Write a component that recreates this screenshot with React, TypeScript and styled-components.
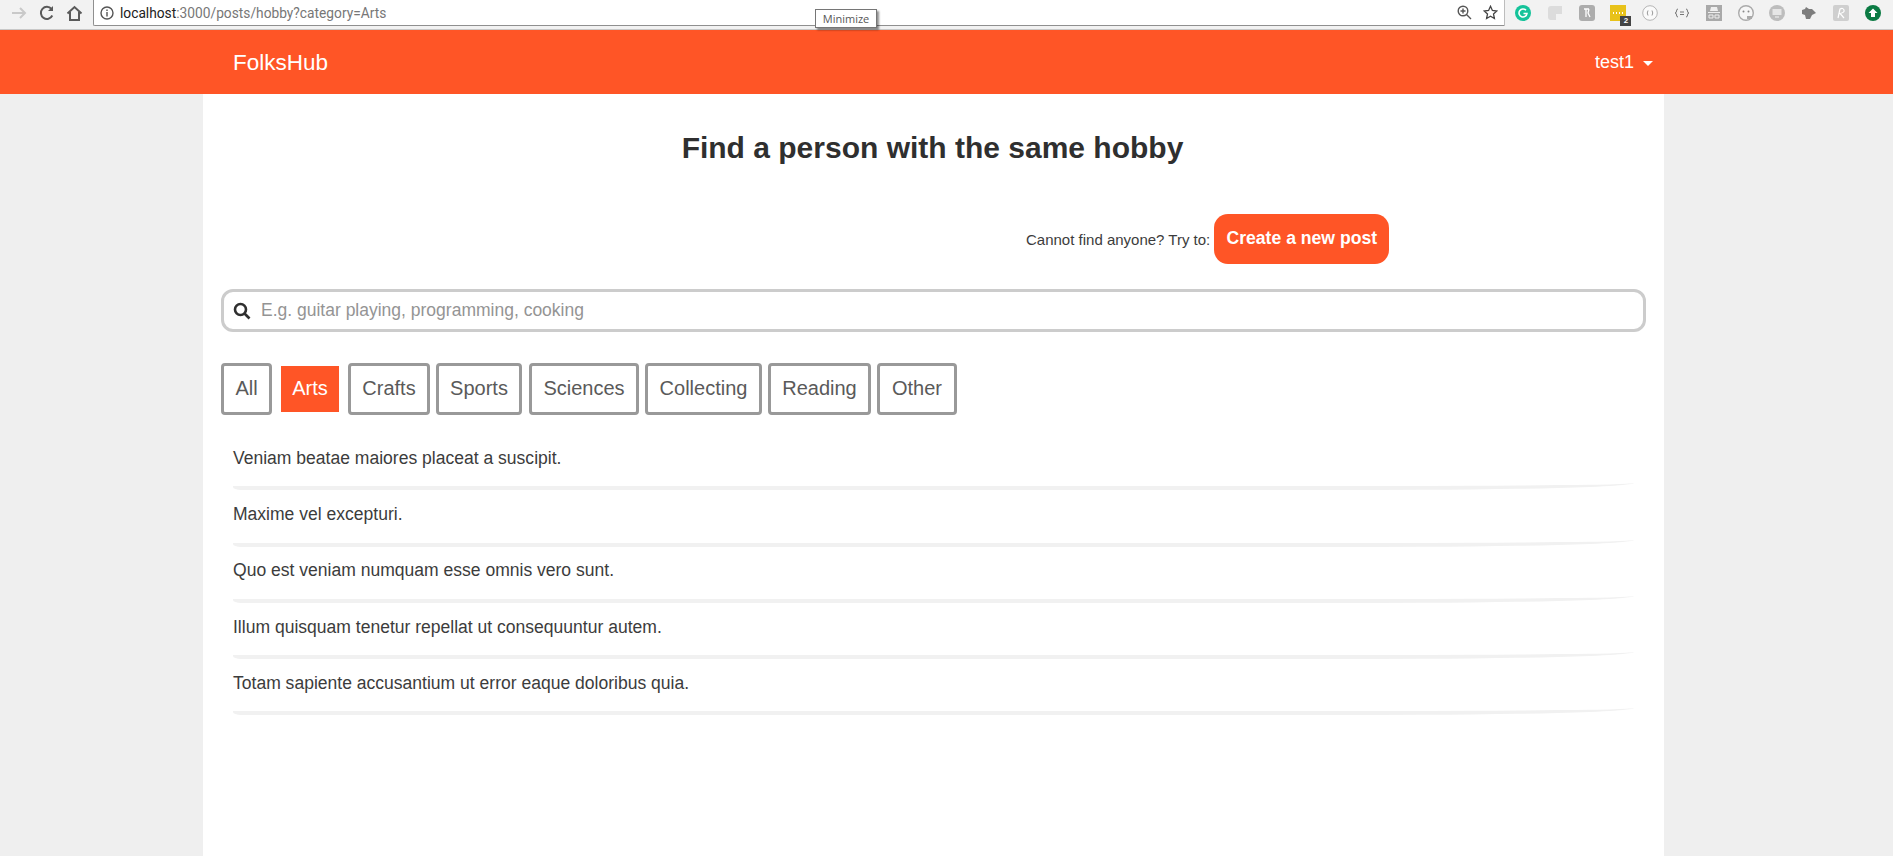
import React from "react";
import styled, { createGlobalStyle } from "styled-components";

const Global = createGlobalStyle`
  html, body { margin: 0; padding: 0; background: #efefef; }
  body { font-family: "Liberation Sans", Arial, sans-serif; color: #2f2f2f; overflow: hidden; }
  * { box-sizing: border-box; }
`;

const Page = styled.div`
  width: 1893px;
  height: 856px;
  display: flex;
  flex-direction: column;
  position: relative;
  overflow: hidden;
`;

const Chrome = styled.div`
  height: 30px;
  flex: none;
  display: flex;
  align-items: flex-start;
  background: #f2f2f2;
  border-bottom: 1px solid #c8c8c8;
`;

const NavButtons = styled.div`
  width: 93px;
  height: 26px;
  flex: none;
  display: flex;
  align-items: center;
  padding-left: 10px;
  gap: 11px;
`;

const Omnibox = styled.div`
  width: 1412px;
  height: 26px;
  flex: none;
  display: flex;
  align-items: center;
  background: #fff;
  border-left: 1px solid #8f8f8f;
  border-bottom: 1px solid #8f8f8f;
  border-right: 1px solid #bdbdbd;
  border-bottom-left-radius: 2px;
  padding-left: 6px;
  font-family: "Roboto", "Liberation Sans", sans-serif;
  font-size: 13.75px;
`;

const Host = styled.span`
  color: #222;
  margin-left: 6px;
`;

const UrlRest = styled.span`
  color: #777;
`;

const OmniSpacer = styled.div`
  flex: 1;
`;

const OmniActions = styled.div`
  display: flex;
  align-items: center;
  gap: 11px;
  padding-right: 6px;
`;

const Extensions = styled.div`
  flex: 1;
  height: 26px;
  display: flex;
  align-items: center;
  padding-left: 10px;
  gap: 15.8px;
`;

const Ext = styled.div`
  position: relative;
  width: 16px;
  height: 16px;
  flex: none;
  display: flex;
  align-items: center;
  justify-content: center;
`;

const ExtBadge = styled.span`
  position: absolute;
  left: 10px;
  top: 11px;
  width: 11px;
  height: 10px;
  background: #444;
  color: #fff;
  font-size: 8px;
  line-height: 10px;
  text-align: center;
  font-weight: 700;
`;

const Tooltip = styled.div`
  position: absolute;
  left: 815px;
  top: 9px;
  width: 62px;
  height: 19px;
  background: #fff;
  border: 1px solid #767676;
  box-shadow: 2px 2px 2px rgba(0, 0, 0, 0.45);
  font-family: "Open Sans", "Liberation Sans", sans-serif;
  font-size: 11px;
  line-height: 17px;
  text-align: center;
  color: #575757;
  z-index: 3;
`;

const Header = styled.header`
  height: 64px;
  flex: none;
  background: #ff5526;
  color: #fff;
  display: flex;
  align-items: center;
  justify-content: space-between;
  padding: 1px 240px 0 233px;
`;

const Brand = styled.div`
  font-size: 22.5px;
`;

const UserMenu = styled.div`
  font-size: 18px;
  display: flex;
  align-items: center;
  gap: 9px;
`;

const Caret = styled.span`
  width: 0;
  height: 0;
  margin-top: 2px;
  border-left: 5px solid transparent;
  border-right: 5px solid transparent;
  border-top: 5px solid #fff;
`;

const Main = styled.main`
  width: 1461px;
  margin-left: 203px;
  flex: 1;
  background: #fff;
  padding: 0 18px;
`;

const Title = styled.h1`
  margin: 34px 0 0;
  padding-right: 2px;
  font-size: 30px;
  line-height: 40px;
  font-weight: 700;
  text-align: center;
  color: #2f2f2f;
`;

const CtaRow = styled.div`
  margin-top: 46px;
  height: 50px;
  display: flex;
  align-items: center;
  padding-left: 805px;
`;

const CtaText = styled.span`
  font-size: 15px;
  color: #3c3c3c;
  margin-right: 4px;
`;

const CtaButton = styled.button`
  width: 175px;
  height: 50px;
  border: none;
  border-radius: 14px;
  background: #ff5526;
  color: #fff;
  font: 700 17.6px "Liberation Sans", Arial, sans-serif;
  padding: 0 0 2px;
`;

const Search = styled.div`
  margin-top: 25px;
  height: 43px;
  width: 1425px;
  display: flex;
  align-items: center;
  border: 3px solid #cccccc;
  border-radius: 12px;
  padding-left: 9px;
  gap: 10px;
`;

const Placeholder = styled.span`
  font-size: 17.5px;
  color: #949494;
`;

const Chips = styled.div`
  margin-top: 31px;
  height: 52px;
  display: flex;
  align-items: center;
`;

const Chip = styled.button<{ $active?: boolean; $w: number; $after: number }>`
  width: ${(p) => p.$w}px;
  height: ${(p) => (p.$active ? 46 : 52)}px;
  margin-right: ${(p) => p.$after}px;
  border: ${(p) => (p.$active ? "none" : "3px solid #999999")};
  border-radius: ${(p) => (p.$active ? 0 : 4)}px;
  background: ${(p) => (p.$active ? "#ff5526" : "#fff")};
  color: ${(p) => (p.$active ? "#fff" : "#5a5a5a")};
  font: 20px "Liberation Sans", Arial, sans-serif;
  padding: 0 0 1px;
`;

const List = styled.div`
  margin-top: 19px;
  padding: 0 12px;
`;

const Row = styled.div`
  height: 56.3px;
  display: flex;
  align-items: center;
  padding-bottom: 4px;
  font-size: 17.55px;
  color: #3c3c3c;
  border-bottom: 4px solid #f1f1f1;
  border-bottom-right-radius: 260px 7px;
  border-bottom-left-radius: 8px 3px;
`;

const categories: [string, number, number][] = [
  ["Crafts", 82, 6],
  ["Sports", 86, 7],
  ["Sciences", 110, 6],
  ["Collecting", 117, 6],
  ["Reading", 103, 6],
  ["Other", 80, 0],
];

const posts = [
  "Veniam beatae maiores placeat a suscipit.",
  "Maxime vel excepturi.",
  "Quo est veniam numquam esse omnis vero sunt.",
  "Illum quisquam tenetur repellat ut consequuntur autem.",
  "Totam sapiente accusantium ut error eaque doloribus quia.",
];

const Grey = ({ children }: { children: React.ReactNode }) => (
  <svg width="16" height="16" viewBox="0 0 16 16">{children}</svg>
);

export default function App() {
  return (
    <Page>
      <Global />
      <Chrome>
        <NavButtons>
          <svg width="18" height="18" viewBox="0 0 18 18" fill="none" stroke="#c9c9c9" strokeWidth="2">
            <path d="M2 9h13M10 4l5 5-5 5" />
          </svg>
          <svg width="16" height="16" viewBox="0 0 16 16" fill="none" stroke="#5a5a5a" strokeWidth="2">
            <path d="M13.3 10.5A6 6 0 1 1 12.5 4" />
            <path d="M14 1v5H9" fill="#5a5a5a" stroke="none" />
          </svg>
          <svg width="17" height="17" viewBox="0 0 17 17" fill="none" stroke="#5a5a5a" strokeWidth="2">
            <path d="M1.5 8.5 8.5 2l7 6.500M4 7v8h9V7" />
          </svg>
        </NavButtons>
        <Omnibox>
          <svg width="14" height="14" viewBox="0 0 14 14" fill="none" stroke="#555" strokeWidth="1.4">
            <circle cx="7" cy="7" r="6" />
            <path d="M7 6v4.500M7 3.500v1.500" />
          </svg>
          <Host>localhost</Host>
          <UrlRest>:3000/posts/hobby?category=Arts</UrlRest>
          <OmniSpacer />
          <OmniActions>
            <svg width="15" height="15" viewBox="0 0 15 15" fill="none" stroke="#555" strokeWidth="1.4">
              <circle cx="6" cy="6" r="4.800" />
              <path d="M9.500 9.500 14 14M6 3.500v5M3.500 6h5" />
            </svg>
            <svg width="15" height="15" viewBox="0 0 15 15" fill="none" stroke="#444" strokeWidth="1.3">
              <path d="M7.500 1.300 9.400 5.500l4.400.5-3.300 3 .9 4.500-3.900-2.300-3.900 2.300.9-4.500-3.300-3 4.400-.5z" />
            </svg>
          </OmniActions>
        </Omnibox>
        <Extensions>
          <Ext>
            <Grey>
              <circle cx="8" cy="8" r="8" fill="#15c39a" />
              <path d="M11 5.300A4 4 0 1 0 12 8.500H8.500" fill="none" stroke="#fff" strokeWidth="1.600" />
            </Grey>
          </Ext>
          <Ext>
            <Grey>
              <path d="M1 4a3 3 0 0 1 3-3h11v8H9v6H4a3 3 0 0 1-3-3z" fill="#dcdcdc" />
            </Grey>
          </Ext>
          <Ext>
            <Grey>
              <rect width="16" height="16" rx="3" fill="#adadad" />
              <path d="M5 4h5M7 4v8M10 4l-1 4 2 4" fill="none" stroke="#fff" strokeWidth="1.300" />
            </Grey>
          </Ext>
          <Ext>
            <Grey>
              <rect width="16" height="16" fill="#e8c21a" />
              <path d="M3 8h1M6 8h1M9 8h1M12 8h1" stroke="#fff" strokeWidth="2" />
            </Grey>
            <ExtBadge>2</ExtBadge>
          </Ext>
          <Ext>
            <Grey>
              <circle cx="8" cy="8" r="7.300" fill="#fafafa" stroke="#b5b5b5" />
              <path d="M6 5.500Q4.500 8 6 10.500M10 5.500Q11.500 8 10 10.500" fill="none" stroke="#999" />
            </Grey>
          </Ext>
          <Ext>
            <Grey>
              <path d="M4 4Q2.500 4 2.500 6T1 8q1.500 0 1.500 2T4 12M12 4q1.500 0 1.500 2T15 8q-1.500 0-1.500 2T12 12" fill="none" stroke="#777" />
              <path d="M6 7h4M6 9.500h4" stroke="#777" />
            </Grey>
          </Ext>
          <Ext>
            <Grey>
              <rect width="16" height="16" fill="#a9a9a9" />
              <path d="M5 2h6l1 4H4zM2 7h12v1H2z" fill="#eee" />
              <path d="M3 10h4v3H3zM9 10h4v3H9z" fill="none" stroke="#eee" />
            </Grey>
          </Ext>
          <Ext>
            <Grey>
              <circle cx="8" cy="8" r="7.300" fill="#f6f6f6" stroke="#aaa" strokeWidth="1.400" />
              <circle cx="5.500" cy="6.500" r="1" fill="#888" />
              <circle cx="10.500" cy="6.500" r="1" fill="#888" />
              <path d="M9 11h5v3H9z" fill="#aaa" />
            </Grey>
          </Ext>
          <Ext>
            <Grey>
              <circle cx="8" cy="8" r="8" fill="#bdbdbd" />
              <rect x="3.500" y="4" width="9" height="6" fill="#e6e6e6" />
              <path d="M6 12h4" stroke="#e6e6e6" strokeWidth="1.400" />
            </Grey>
          </Ext>
          <Ext>
            <Grey>
              <path d="M1 5l3-1 1-2 3 2h3l4 4-4 2-2 4H5l-1-4-3-1z" fill="#7d7d7d" />
            </Grey>
          </Ext>
          <Ext>
            <Grey>
              <rect width="16" height="16" rx="2" fill="#cfcfcf" />
              <path d="M5 13 7 4q3-1.500 4 1T7 8.500l4 4.500" fill="none" stroke="#fff" strokeWidth="1.200" />
            </Grey>
          </Ext>
          <Ext>
            <Grey>
              <circle cx="8" cy="8" r="8" fill="#0b7a43" />
              <path d="M8 3.500 12.500 8H10v4H6V8H3.500z" fill="#fff" />
            </Grey>
          </Ext>
        </Extensions>
      </Chrome>
      <Tooltip>Minimize</Tooltip>
      <Header>
        <Brand>FolksHub</Brand>
        <UserMenu>
          test1
          <Caret />
        </UserMenu>
      </Header>
      <Main>
        <Title>Find a person with the same hobby</Title>
        <CtaRow>
          <CtaText>Cannot find anyone? Try to:</CtaText>
          <CtaButton>Create a new post</CtaButton>
        </CtaRow>
        <Search>
          <svg width="18" height="18" viewBox="0 0 18 18" fill="none" stroke="#2f2f2f" strokeWidth="2.600">
            <circle cx="7.500" cy="7.500" r="5.500" />
            <path d="M11.500 11.500 16.500 16.500" />
          </svg>
          <Placeholder>E.g. guitar playing, programming, cooking</Placeholder>
        </Search>
        <Chips>
          <Chip $w={51} $after={9}>All</Chip>
          <Chip $w={58} $after={9} $active>Arts</Chip>
          {categories.map(([name, w, after]) => (
            <Chip key={name} $w={w} $after={after}>{name}</Chip>
          ))}
        </Chips>
        <List>
          {posts.map((p) => (
            <Row key={p}>{p}</Row>
          ))}
        </List>
      </Main>
    </Page>
  );
}
